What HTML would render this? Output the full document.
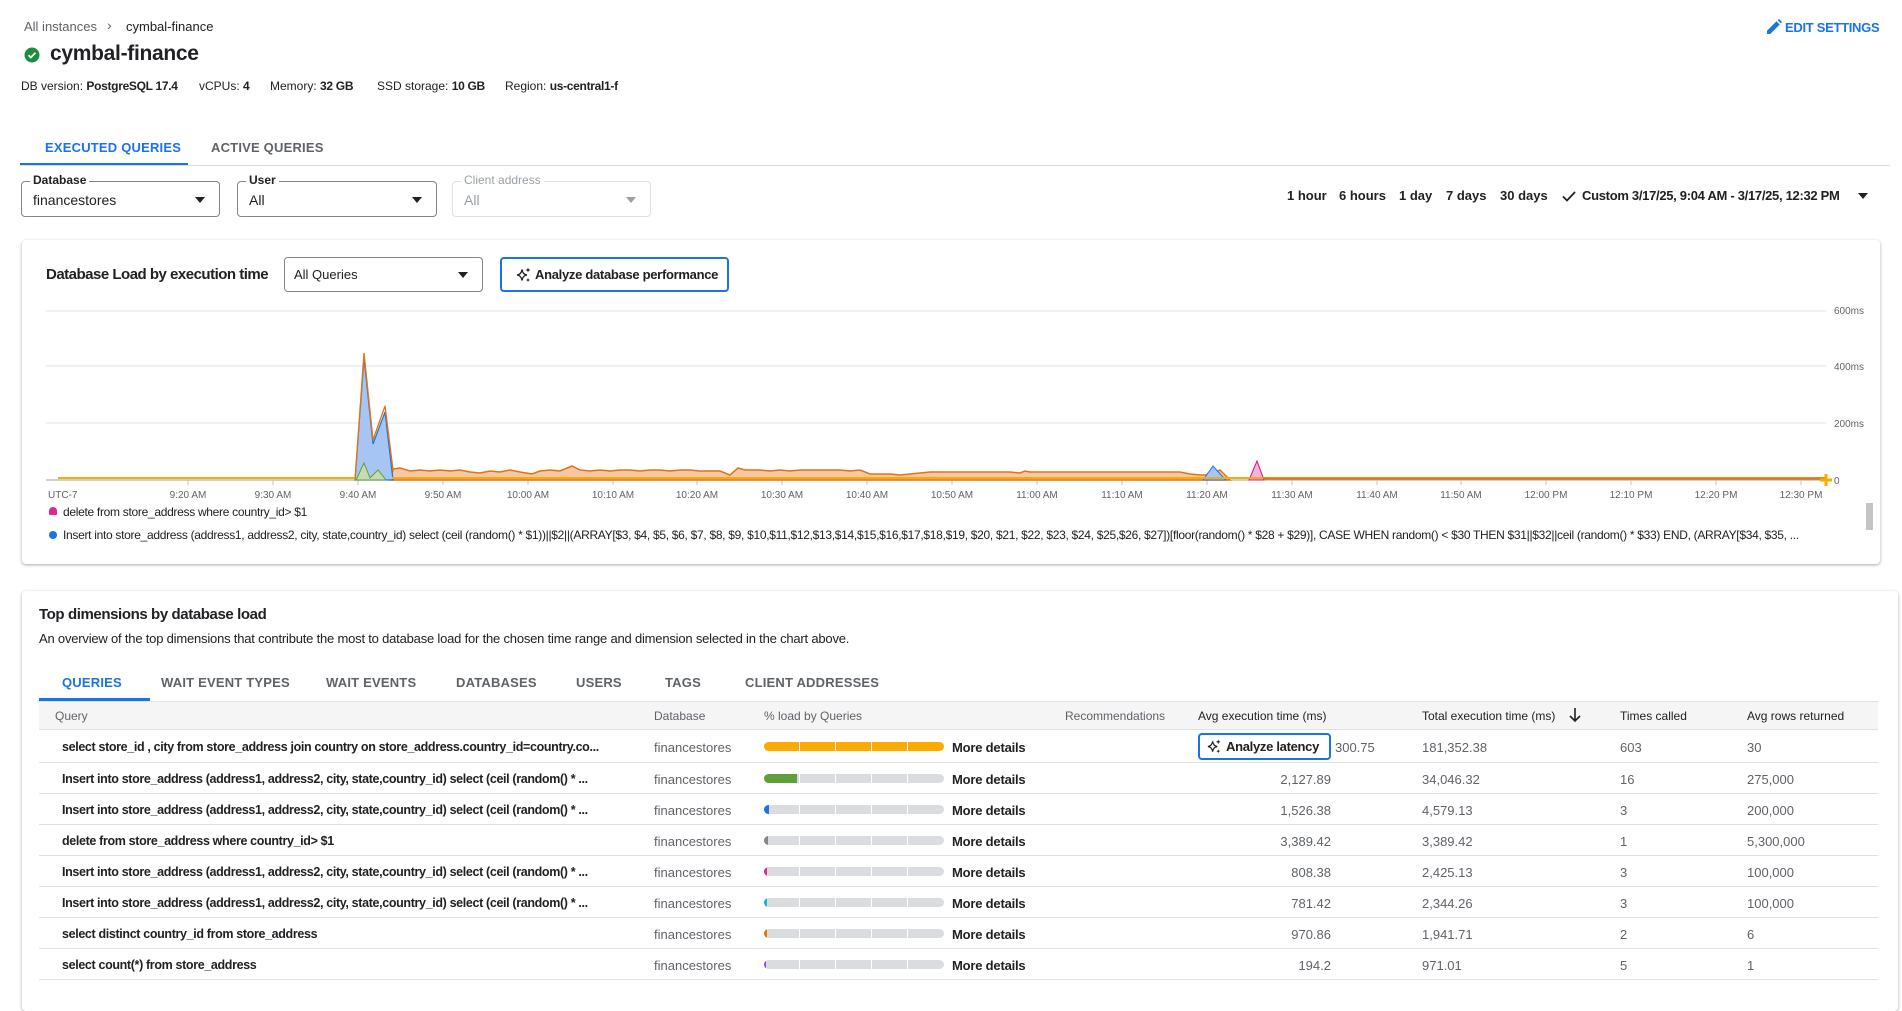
<!DOCTYPE html>
<html><head><meta charset="utf-8"><style>
*{box-sizing:border-box;margin:0;padding:0}
body{width:1902px;height:985px;overflow:hidden;background:#fff;font-family:"Liberation Sans",Arial,sans-serif;color:#202124;position:relative;font-size:13px}
.a{position:absolute;white-space:nowrap}
.g{color:#5f6368}
.sel{position:absolute;border:1px solid #80868b;border-radius:4px;height:36px}
.sel .lab{position:absolute;top:-9px;left:8px;background:#fff;padding:0 3px;font-size:12px;font-weight:bold}
.sel .v{position:absolute;left:11px;top:10px;font-size:14px}
.tri{position:absolute;width:0;height:0;border-left:5px solid transparent;border-right:5px solid transparent;border-top:6px solid #202124}
.card{position:absolute;background:#fff;border-radius:4px;box-shadow:0 1px 2px rgba(60,64,67,.3),0 1px 3px 1px rgba(60,64,67,.12)}
.tab{position:absolute;font-size:13px;font-weight:bold;color:#5f6368;letter-spacing:.2px}
.row{position:absolute;left:39px;width:1839px;height:31px;border-bottom:1px solid #e0e0e0}
.row span{position:absolute;top:9px;white-space:nowrap}
.q{left:23px;font-weight:bold;font-size:12.5px;letter-spacing:-0.35px}
.db{left:615px;color:#5f6368}
.bar{position:absolute;left:725px;top:11px;width:180px;height:9px;border-radius:5px;background:linear-gradient(90deg,#dadce0 0 35px,#fff 35px 36px,#dadce0 36px 71px,#fff 71px 72px,#dadce0 72px 107px,#fff 107px 108px,#dadce0 108px 143px,#fff 143px 144px,#dadce0 144px);overflow:hidden}
.md{left:913px;font-weight:bold;letter-spacing:-0.2px}
.av{right:547px;color:#5f6368}
.tt{left:1383px;color:#5f6368}
.tc{left:1581px;color:#5f6368}
.ar{left:1708px;color:#5f6368}
.m{font-size:12px}
.m b{letter-spacing:-0.3px}
</style></head><body>

<div class="a g" style="left:24px;top:19px;font-size:13px">All instances</div>
<div class="a" style="left:107px;top:17px;font-size:14px;color:#5f6368">›</div>
<div class="a" style="left:126px;top:19px;font-size:13px">cymbal-finance</div>
<svg class="a" style="left:24px;top:47px" width="16" height="16" viewBox="0 0 16 16"><circle cx="8" cy="8" r="7.5" fill="#1e8e3e"/><path d="M4.5 8.2l2.3 2.3 4.7-4.7" stroke="#fff" stroke-width="1.8" fill="none"/></svg>
<div class="a" style="left:50px;top:42px;font-size:21px;font-weight:bold;letter-spacing:-0.3px">cymbal-finance</div>
<div class="a m" style="left:21px;top:79px">DB version: <b>PostgreSQL 17.4</b></div>
<div class="a m" style="left:199px;top:79px">vCPUs: <b>4</b></div>
<div class="a m" style="left:270px;top:79px">Memory: <b>32 GB</b></div>
<div class="a m" style="left:377px;top:79px">SSD storage: <b>10 GB</b></div>
<div class="a m" style="left:505px;top:79px">Region: <b>us-central1-f</b></div>

<svg class="a" style="left:1766px;top:19px" width="16" height="16" viewBox="0 0 16 16"><path d="M1 15v-3.2L10.5 2.3l3.2 3.2L4.2 15z M11.6 1.2l1.4-1.2 3 3-1.2 1.4z" fill="#1a73e8"/></svg>
<div class="a" style="left:1785px;top:20px;font-size:13px;font-weight:bold;color:#1a73e8;letter-spacing:-0.3px">EDIT SETTINGS</div>

<div class="tab" style="left:45px;top:140px;color:#1a73e8">EXECUTED QUERIES</div>
<div class="tab" style="left:211px;top:140px">ACTIVE QUERIES</div>
<div class="a" style="left:20px;top:163px;width:168px;height:3px;background:#1a73e8"></div>
<div class="a" style="left:20px;top:165px;width:1870px;height:1px;background:#dadce0"></div>

<div class="sel" style="left:21px;top:181px;width:199px"><span class="lab">Database</span><span class="v">financestores</span><div class="tri" style="right:14px;top:15px"></div></div>
<div class="sel" style="left:237px;top:181px;width:200px"><span class="lab">User</span><span class="v">All</span><div class="tri" style="right:14px;top:15px"></div></div>
<div class="sel" style="left:452px;top:181px;width:199px;border-color:#e0e0e0"><span class="lab" style="color:#9aa0a6;font-weight:normal">Client address</span><span class="v" style="color:#9aa0a6">All</span><div class="tri" style="right:14px;top:15px;border-top-color:#9aa0a6"></div></div>

<div class="a" style="left:1287px;top:188px;font-size:13px;font-weight:bold">1 hour</div>
<div class="a" style="left:1339px;top:188px;font-size:13px;font-weight:bold">6 hours</div>
<div class="a" style="left:1399px;top:188px;font-size:13px;font-weight:bold">1 day</div>
<div class="a" style="left:1446px;top:188px;font-size:13px;font-weight:bold">7 days</div>
<div class="a" style="left:1500px;top:188px;font-size:13px;font-weight:bold">30 days</div>
<svg class="a" style="left:1562px;top:189px" width="14" height="14" viewBox="0 0 14 14"><path d="M1 7.5l4 4L13 3" stroke="#202124" stroke-width="1.8" fill="none"/></svg>
<div class="a" style="left:1582px;top:188px;font-size:13px;font-weight:bold;letter-spacing:-0.3px">Custom 3/17/25, 9:04 AM - 3/17/25, 12:32 PM</div>
<div class="tri" style="left:1858px;top:193px"></div>

<div class="card" style="left:22px;top:240px;width:1858px;height:324px"></div>
<div class="a" style="left:46px;top:266px;font-size:15px;font-weight:bold;letter-spacing:-0.5px">Database Load by execution time</div>
<div class="sel" style="left:284px;top:257px;width:199px;height:35px"><span class="v" style="left:9px;top:9px;font-size:13px">All Queries</span><div class="tri" style="right:14px;top:14px"></div></div>
<div class="a" style="left:500px;top:257px;width:229px;height:35px;border:2px solid #1a73e8;border-radius:4px"></div>
<svg class="a" style="left:516px;top:267px" width="16" height="16" viewBox="0 0 16 16"><path d="M6 2.5Q6.6 7.4 11 8 6.6 8.6 6 13.5 5.4 8.6 1 8 5.4 7.4 6 2.5z" fill="none" stroke="#202124" stroke-width="1.3"/><path d="M12 0.5l.7 1.8 1.8.7-1.8.7-.7 1.8-.7-1.8-1.8-.7 1.8-.7z M12 11l.6 1.4 1.4.6-1.4.6-.6 1.4-.6-1.4-1.4-.6 1.4-.6z" fill="#202124"/></svg>
<div class="a" style="left:535px;top:267px;font-size:13px;font-weight:bold;letter-spacing:-0.3px">Analyze database performance</div>

<svg class="a" style="left:0;top:0" width="1902" height="560">
<g stroke="#e0e0e0" stroke-width="1"><line x1="46" y1="311" x2="1826" y2="311"/><line x1="46" y1="366" x2="1826" y2="366"/><line x1="46" y1="423" x2="1826" y2="423"/></g>
<line x1="46" y1="480" x2="1826" y2="480" stroke="#9aa0a6"/>
<g font-family="Liberation Sans" font-size="10" fill="#5f6368">
<text x="1834" y="314">600ms</text><text x="1834" y="370">400ms</text><text x="1834" y="427">200ms</text><text x="1834" y="484">0</text>
<text x="48" y="498">UTC-7</text>
</g>
<g font-family="Liberation Sans" font-size="10" fill="#5f6368" text-anchor="middle">
<text x="188" y="498">9:20 AM</text><text x="273" y="498">9:30 AM</text><text x="358" y="498">9:40 AM</text><text x="443" y="498">9:50 AM</text><text x="528" y="498">10:00 AM</text><text x="613" y="498">10:10 AM</text><text x="697" y="498">10:20 AM</text><text x="782" y="498">10:30 AM</text><text x="867" y="498">10:40 AM</text><text x="952" y="498">10:50 AM</text><text x="1037" y="498">11:00 AM</text><text x="1122" y="498">11:10 AM</text><text x="1207" y="498">11:20 AM</text><text x="1292" y="498">11:30 AM</text><text x="1377" y="498">11:40 AM</text><text x="1461" y="498">11:50 AM</text><text x="1546" y="498">12:00 PM</text><text x="1631" y="498">12:10 PM</text><text x="1716" y="498">12:20 PM</text><text x="1801" y="498">12:30 PM</text>
</g>
<g stroke="#bdc1c6"><line x1="188" y1="480" x2="188" y2="485"/><line x1="273" y1="480" x2="273" y2="485"/><line x1="358" y1="480" x2="358" y2="485"/><line x1="443" y1="480" x2="443" y2="485"/><line x1="528" y1="480" x2="528" y2="485"/><line x1="613" y1="480" x2="613" y2="485"/><line x1="697" y1="480" x2="697" y2="485"/><line x1="782" y1="480" x2="782" y2="485"/><line x1="867" y1="480" x2="867" y2="485"/><line x1="952" y1="480" x2="952" y2="485"/><line x1="1037" y1="480" x2="1037" y2="485"/><line x1="1122" y1="480" x2="1122" y2="485"/><line x1="1207" y1="480" x2="1207" y2="485"/><line x1="1292" y1="480" x2="1292" y2="485"/><line x1="1377" y1="480" x2="1377" y2="485"/><line x1="1461" y1="480" x2="1461" y2="485"/><line x1="1546" y1="480" x2="1546" y2="485"/><line x1="1631" y1="480" x2="1631" y2="485"/><line x1="1716" y1="480" x2="1716" y2="485"/><line x1="1801" y1="480" x2="1801" y2="485"/></g>
<path d="M391 480L393 469 400 468 410 471 420 470 430 471 440 470 450 471 460 470 470 472 480 473 490 471 500 472 510 470 520 472 532 474 540 471 550 470 560 471 572 466 580 470 590 471 600 470 610 471 620 470 630 470 640 471 650 470 660 470 670 471 680 470 690 470 700 471 720 471 730 475 738 468 745 470 760 470 770 471 780 470 790 471 800 470 820 470 840 470 850 471 860 470 870 474 880 474 890 474 900 475 910 474 920 473 930 472 950 472 970 472 990 472 1010 472 1020 473 1025 471 1030 472 1050 472 1070 472 1090 472 1120 472 1150 472 1180 472 1190 474 1200 475 1205 475 1210 474 1220 470 1230 480Z" fill="#f7c8a8" stroke="#e8710a" stroke-width="1.5"/>
<path d="M355 480L364 358 373 444 385 412 393 480Z" fill="#a6c4f4" stroke="#1a73e8" stroke-width="1.2"/>
<path d="M355 480L364 353 373 440 385 406 393 470" fill="none" stroke="#e8710a" stroke-width="1.3"/>
<path d="M356 480L364 463 370 478 378 470 386 480Z" fill="#c5dcb0" stroke="#5f9e3a" stroke-width="1"/>
<path d="M1203 480L1213 466 1222 476 1226 480Z" fill="#a6c4f4" stroke="#1a73e8" stroke-width="1"/>
<path d="M1249 480L1257 461 1264 480Z" fill="#f4b3d8" stroke="#d01884" stroke-width="1"/>
<path d="M58 478H355 M392 478H1826" stroke="#f9ab00" stroke-width="2"/>
<path d="M1263 478.5H1826" stroke="#e8710a" stroke-width="2"/>
<path d="M1820 480h12M1826 474v12" stroke="#f9ab00" stroke-width="3"/>
<rect x="1866" y="503" width="7" height="27" fill="#c4c4c4"/>
</svg>
<div class="a" style="left:49px;top:507px;width:8px;height:8px;border-radius:4px 4px 1px 1px;background:#e52592"></div>
<div class="a" style="left:63px;top:505px;font-size:12px;letter-spacing:-0.3px">delete from store_address where country_id&gt; $1</div>
<div class="a" style="left:49px;top:531px;width:8px;height:8px;border-radius:4px;background:#1a73e8"></div>
<div class="a" style="left:63px;top:528px;font-size:12px;letter-spacing:-0.3px">Insert into store_address (address1, address2, city, state,country_id) select (ceil (random() * $1))||$2||(ARRAY[$3, $4, $5, $6, $7, $8, $9, $10,$11,$12,$13,$14,$15,$16,$17,$18,$19, $20, $21, $22, $23, $24, $25,$26, $27])[floor(random() * $28 + $29)], CASE WHEN random() &lt; $30 THEN $31||$32||ceil (random() * $33) END, (ARRAY[$34, $35, ...</div>

<div class="card" style="left:22px;top:591px;width:1876px;height:420px"></div>
<div class="a" style="left:39px;top:606px;font-size:15px;font-weight:bold;letter-spacing:-0.4px">Top dimensions by database load</div>
<div class="a" style="left:39px;top:631px;font-size:13px;letter-spacing:-0.2px">An overview of the top dimensions that contribute the most to database load for the chosen time range and dimension selected in the chart above.</div>

<div class="tab" style="left:62px;top:675px;color:#1a73e8">QUERIES</div>
<div class="tab" style="left:161px;top:675px">WAIT EVENT TYPES</div>
<div class="tab" style="left:326px;top:675px">WAIT EVENTS</div>
<div class="tab" style="left:456px;top:675px">DATABASES</div>
<div class="tab" style="left:576px;top:675px">USERS</div>
<div class="tab" style="left:665px;top:675px">TAGS</div>
<div class="tab" style="left:745px;top:675px">CLIENT ADDRESSES</div>
<div class="a" style="left:39px;top:698px;width:111px;height:3px;background:#1a73e8"></div>

<div class="a" style="left:39px;top:701px;width:1839px;height:29px;background:#f5f5f5;border-top:1px solid #e0e0e0;border-bottom:1px solid #e0e0e0"></div>
<div class="a g" style="left:55px;top:709px;font-size:12px">Query</div>
<div class="a g" style="left:654px;top:709px;font-size:12px">Database</div>
<div class="a g" style="left:764px;top:709px;font-size:12px">% load by Queries</div>
<div class="a g" style="left:1065px;top:709px;font-size:12px">Recommendations</div>
<div class="a" style="left:1198px;top:709px;font-size:12px">Avg execution time (ms)</div>
<div class="a" style="left:1422px;top:709px;font-size:12px">Total execution time (ms)</div>
<svg class="a" style="left:1568px;top:707px" width="14" height="16" viewBox="0 0 14 16"><path d="M7 1v13M2 9l5 5 5-5" stroke="#202124" stroke-width="1.6" fill="none"/></svg>
<div class="a" style="left:1620px;top:709px;font-size:12px">Times called</div>
<div class="a" style="left:1747px;top:709px;font-size:12px">Avg rows returned</div>

<div class="row" style="top:730px;height:33px"><span class="q" style="top:10px">select store_id , city from store_address join country on store_address.country_id=country.co...</span><span class="db" style="top:10px">financestores</span><div class="bar" style="top:12px;background:linear-gradient(90deg,#f9ab00 0 35px,#fff 35px 36px,#f9ab00 36px 71px,#fff 71px 72px,#f9ab00 72px 107px,#fff 107px 108px,#f9ab00 108px 143px,#fff 143px 144px,#f9ab00 144px)"></div><span class="md" style="top:10px">More details</span>
<div style="position:absolute;left:1159px;top:3px;width:133px;height:27px;border:2px solid #1a73e8;border-radius:4px"></div>
<svg style="position:absolute;left:1168px;top:9px" width="15" height="15" viewBox="0 0 16 16"><path d="M6 2.5Q6.6 7.4 11 8 6.6 8.6 6 13.5 5.4 8.6 1 8 5.4 7.4 6 2.5z" fill="none" stroke="#202124" stroke-width="1.3"/><path d="M12 0.5l.7 1.8 1.8.7-1.8.7-.7 1.8-.7-1.8-1.8-.7 1.8-.7z M12 11l.6 1.4 1.4.6-1.4.6-.6 1.4-.6-1.4-1.4-.6 1.4-.6z" fill="#202124"/></svg>
<span style="left:1187px;top:9px;font-weight:bold;letter-spacing:-0.3px">Analyze latency</span>
<span class="g" style="left:1296px;top:10px">300.75</span><span class="tt" style="top:10px">181,352.38</span><span class="tc" style="top:10px">603</span><span class="ar" style="top:10px">30</span></div>

<div class="row" style="top:763px"><span class="q">Insert into store_address (address1, address2, city, state,country_id) select (ceil (random() * ...</span><span class="db">financestores</span><div class="bar"><div style="width:33px;height:9px;background:#5f9e3a"></div></div><span class="md">More details</span><span class="av">2,127.89</span><span class="tt">34,046.32</span><span class="tc">16</span><span class="ar">275,000</span></div>
<div class="row" style="top:794px"><span class="q">Insert into store_address (address1, address2, city, state,country_id) select (ceil (random() * ...</span><span class="db">financestores</span><div class="bar"><div style="width:5px;height:9px;background:#1a73e8"></div></div><span class="md">More details</span><span class="av">1,526.38</span><span class="tt">4,579.13</span><span class="tc">3</span><span class="ar">200,000</span></div>
<div class="row" style="top:825px"><span class="q">delete from store_address where country_id&gt; $1</span><span class="db">financestores</span><div class="bar"><div style="width:4px;height:9px;background:#80868b"></div></div><span class="md">More details</span><span class="av">3,389.42</span><span class="tt">3,389.42</span><span class="tc">1</span><span class="ar">5,300,000</span></div>
<div class="row" style="top:856px"><span class="q">Insert into store_address (address1, address2, city, state,country_id) select (ceil (random() * ...</span><span class="db">financestores</span><div class="bar"><div style="width:3px;height:9px;background:#e52592"></div></div><span class="md">More details</span><span class="av">808.38</span><span class="tt">2,425.13</span><span class="tc">3</span><span class="ar">100,000</span></div>
<div class="row" style="top:887px"><span class="q">Insert into store_address (address1, address2, city, state,country_id) select (ceil (random() * ...</span><span class="db">financestores</span><div class="bar"><div style="width:3px;height:9px;background:#12b5cb"></div></div><span class="md">More details</span><span class="av">781.42</span><span class="tt">2,344.26</span><span class="tc">3</span><span class="ar">100,000</span></div>
<div class="row" style="top:918px"><span class="q">select distinct country_id from store_address</span><span class="db">financestores</span><div class="bar"><div style="width:3px;height:9px;background:#e8710a"></div></div><span class="md">More details</span><span class="av">970.86</span><span class="tt">1,941.71</span><span class="tc">2</span><span class="ar">6</span></div>
<div class="row" style="top:949px"><span class="q">select count(*) from store_address</span><span class="db">financestores</span><div class="bar"><div style="width:2px;height:9px;background:#a142f4"></div></div><span class="md">More details</span><span class="av">194.2</span><span class="tt">971.01</span><span class="tc">5</span><span class="ar">1</span></div>

</body></html>
